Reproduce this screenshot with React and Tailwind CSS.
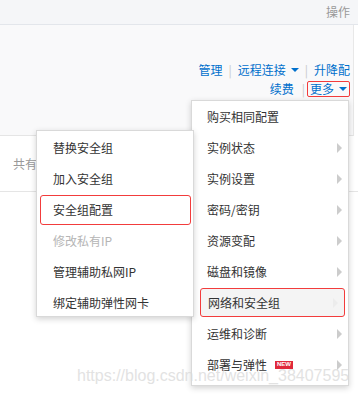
import React from "react";

const Arrow = ({ light }) => (
  <span
    className={`absolute right-[6px] top-1/2 -translate-y-1/2 w-0 h-0 border-y-[5px] border-y-transparent border-l-[5px] ${light ? "border-l-[#ececec]" : "border-l-[#cccccc]"}`}
  />
);

const Caret = () => (
  <span className="inline-block w-0 h-0 border-x-[4px] border-x-transparent border-t-[4px] border-t-[#0070cc] ml-[5px] mb-[1px]" />
);

const Sep = () => <span className="text-[#c8c8c8] mx-[6px]">|</span>;

export default function App() {
  const rightItems = [
    { t: "购买相同配置" },
    { t: "实例状态", a: true },
    { t: "实例设置", a: true },
    { t: "密码/密钥", a: true },
    { t: "资源变配", a: true },
    { t: "磁盘和镜像", a: true },
    { t: "网络和安全组", a: true, hl: true },
    { t: "运维和诊断", a: true },
    { t: "部署与弹性", a: true, badge: true },
  ];
  const leftItems = [
    { t: "替换安全组" },
    { t: "加入安全组" },
    { t: "安全组配置", hl: true },
    { t: "修改私有IP", dis: true },
    { t: "管理辅助私网IP" },
    { t: "绑定辅助弹性网卡" },
  ];
  return (
    <div
      className="relative w-[358px] h-[396px] overflow-hidden bg-white text-[12px] text-[#333]"
      style={{ fontFamily: '"Noto Sans CJK SC", "Noto Sans", sans-serif' }}
    >
      <div className="h-[25px] bg-[#f5f6f8] border-b border-[#e3e6eb] flex items-center justify-end pr-[8px] text-[#999]">
        操作
      </div>
      <div className="h-[111px] bg-[#f9f9fa] border-b border-[#e5e5e5] border-r border-r-[#e8e8e8] mr-[4px] flex flex-col items-end pt-[36px] pr-[3px] leading-[18px]">
        <div className="flex items-center text-[#0070cc]">
          <span>管理</span>
          <Sep />
          <span>远程连接</span>
          <Caret />
          <Sep />
          <span>升降配</span>
        </div>
        <div className="flex items-center text-[#0070cc] mt-[1px]">
          <span>续费</span>
          <span className="text-[#c8c8c8] ml-[8px] mr-[2px]">|</span>
          <span className="flex items-center border border-[#f23c3c] rounded-[2px] px-[2px] h-[16px] pr-[2px]">
            更多
            <Caret />
          </span>
        </div>
      </div>
      <div className="h-[56px] border-b border-[#e5e5e5] flex items-center pl-[13px] text-[#999]">
        共有
      </div>

      {/* Right dropdown */}
      <div className="absolute left-[191px] top-[100px] w-[158px] h-[286px] bg-white border border-[#d9d9d9] shadow-[0_2px_6px_rgba(0,0,0,0.18)] pb-[6px]">
        {rightItems.map((it) =>
          it.hl ? (
            <div key={it.t} className="h-[31px] flex items-center">
              <div className="relative ml-[8px] mr-[3px] flex-1 h-[29px] flex items-center pl-[7px] bg-[#f4f4f4] border border-[#f23c3c] rounded-[3px]">
                {it.t}
                <Arrow light />
              </div>
            </div>
          ) : (
            <div key={it.t} className="relative h-[31px] flex items-center pl-[15px]">
              {it.t}
              {it.badge && (
                <span className="ml-[8px] bg-[#e0283a] text-white text-[6px] leading-[7px] font-bold px-[2px] h-[8px] flex items-center" style={{ fontFamily: '"Liberation Sans", sans-serif' }}>
                  NEW
                </span>
              )}
              {it.a && <Arrow />}
            </div>
          )
        )}
      </div>

      {/* Left submenu */}
      <div className="absolute left-[36px] top-[130px] w-[158px] h-[187px] bg-white border border-[#d9d9d9] shadow-[0_2px_6px_rgba(0,0,0,0.18)] pt-[1px]">
        {leftItems.map((it) =>
          it.hl ? (
            <div key={it.t} className="h-[31px] flex items-center">
              <div className="ml-[3px] mr-[2px] flex-1 h-[30px] flex items-center pl-[12px] border border-[#f23c3c] rounded-[3px]">
                {it.t}
              </div>
            </div>
          ) : (
            <div key={it.t} className={`h-[31px] flex items-center pl-[16px] ${it.dis ? "text-[#b5b5b5]" : ""}`}>
              {it.t}
            </div>
          )
        )}
      </div>

      {/* Watermark */}
      <div
        className="absolute left-[77px] top-[366px] text-[16px] leading-[20px] text-[#d9d9d9] opacity-75 whitespace-nowrap"
        style={{ fontFamily: '"Liberation Sans", sans-serif' }}
      >
        https://blog.csdn.net/weixin_38407595
      </div>
    </div>
  );
}
